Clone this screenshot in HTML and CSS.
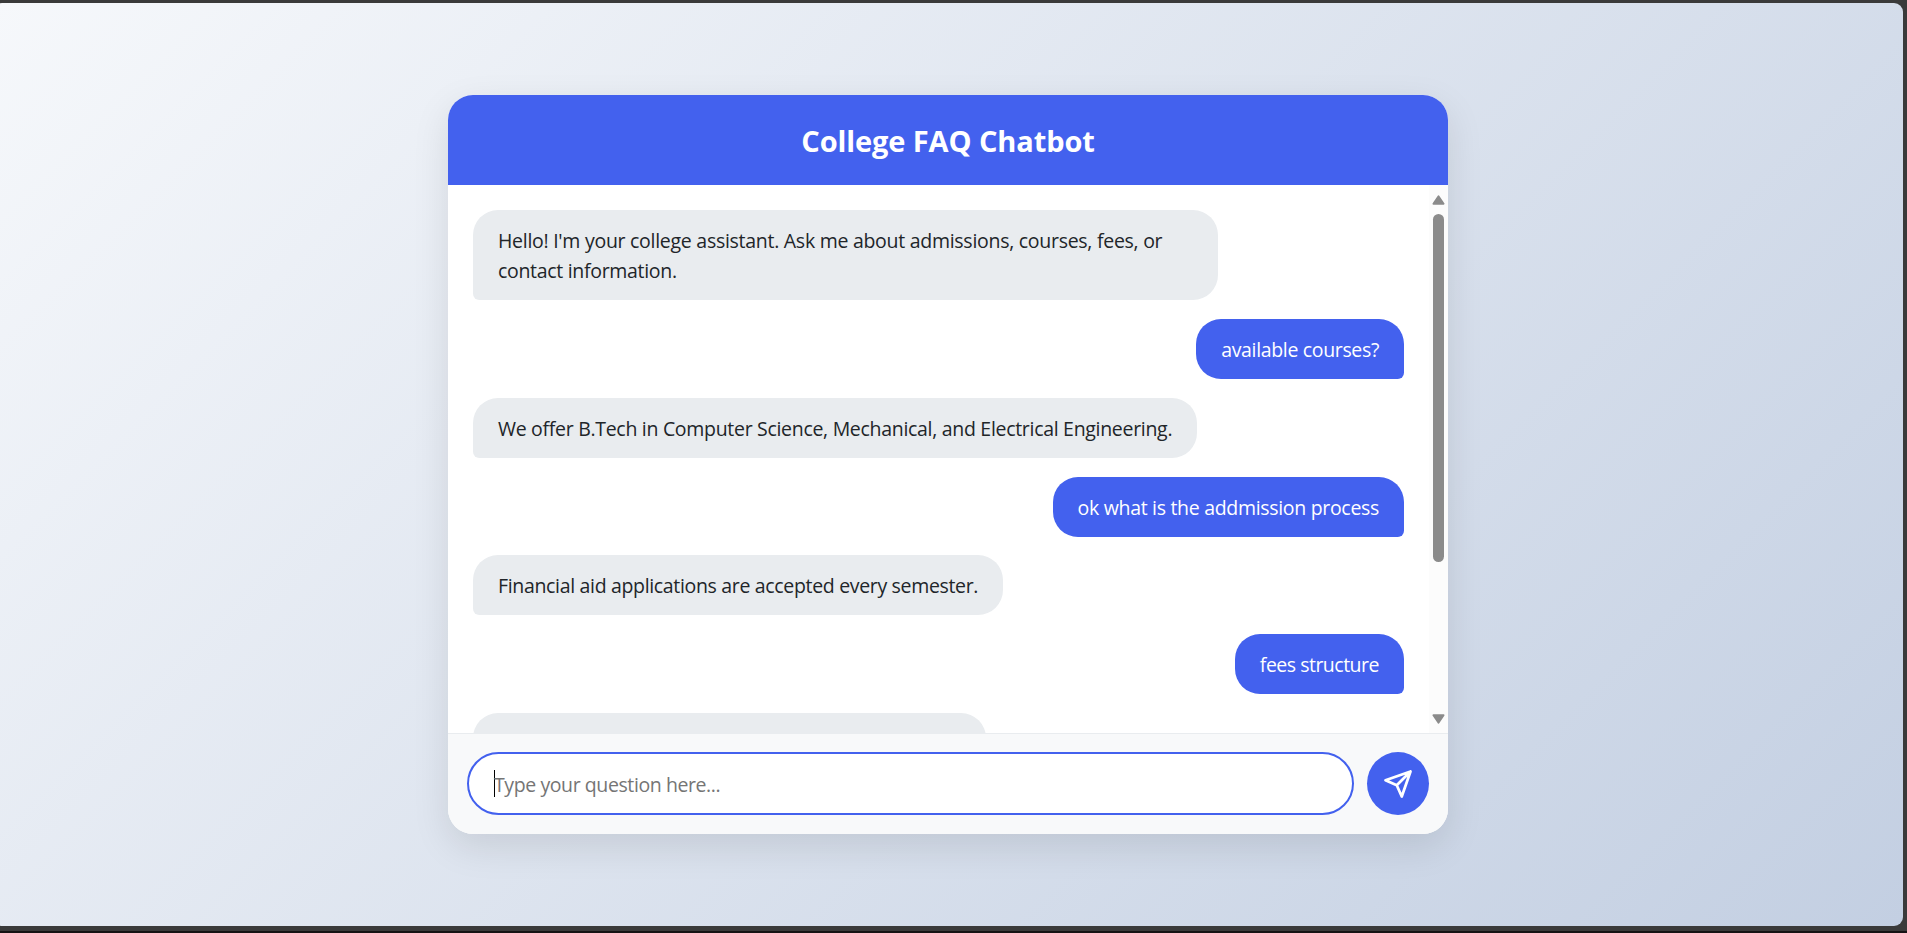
FILE: index.html
```html
<!DOCTYPE html>
<html lang="en">
<head>
<meta charset="utf-8">
<title>College FAQ Chatbot</title>
<link rel="stylesheet" href="styles.css">
</head>
<body>
<div class="viewport">
  <main class="chat">
    <header class="chat-header"><h1 class="title">College FAQ Chatbot</h1></header>
    <section class="chat-body">
      <div class="messages">
        <div class="message bot long"><span class="greeting">Hello! I'm your college assistant. Ask me about admissions, courses, fees, or</span> contact information.</div>
        <div class="message user courses">available courses?</div>
        <div class="message bot offer">We offer B.Tech in Computer Science, Mechanical, and Electrical Engineering.</div>
        <div class="message user">ok what is the addmission process</div>
        <div class="message bot aid">Financial aid applications are accepted every semester.</div>
        <div class="message user fees">fees structure</div>
        <div class="message bot cut"></div>
      </div>
      <div class="scrollbar">
        <svg class="arrow" viewBox="0 0 13 10"><path d="M6.5 1.2 11.6 8.8H1.4Z"/></svg>
        <div class="track"><div class="thumb"></div></div>
        <svg class="arrow" viewBox="0 0 13 10"><path d="M6.5 8.8 1.4 1.2H11.6Z"/></svg>
      </div>
    </section>
    <footer class="chat-input">
      <div class="field"><span class="caret"></span><span class="placeholder">Type your question here...</span></div>
      <button class="send" aria-label="Send">
        <svg class="send-icon" viewBox="0 0 24 24"><path d="M22 2 11 13M22 2l-7 20-4-9-9-4 20-7z"/></svg>
      </button>
    </footer>
  </main>
</div>
</body>
</html>
```
FILE: styles.css
```css
* { box-sizing: border-box; }
body {
  margin: 0;
  height: 933px;
  padding: 3px 4px 5px 0;
  overflow: hidden;
  background: #3a3a3a;
  border-bottom: 2px solid #151314;
  font-family: "Open Sans", "Noto Sans", sans-serif;
}
.viewport {
  height: 923px;
  margin-left: -7px;
  padding-left: 455px;
  padding-top: 92px;
  border-radius: 9px;
  background: linear-gradient(135deg, #f6f8fb 0%, #c3cfe2 100%);
}
.chat {
  display: flex;
  flex-direction: column;
  width: 1000px;
  height: 739px;
  overflow: hidden;
  border-radius: 25px;
  background: #fff;
  box-shadow: 0 12.5px 37.5px rgba(0, 0, 0, 0.1);
}
.chat-header {
  display: flex;
  align-items: center;
  justify-content: center;
  height: 90px;
  flex: none;
  padding-top: 2px;
  background: #4361ee;
  color: #fff;
}
.title { margin: 0; font-size: 29px; font-weight: 700; line-height: 40px; letter-spacing: -0.1px; }
.chat-body { display: flex; flex: 1; min-height: 0; }
.messages {
  display: flex;
  flex-direction: column;
  flex: 1;
  gap: 18.75px;
  padding: 25.3px 25px 0;
  overflow: hidden;
}
.message {
  flex: none;
  padding: 16px 25px 14px;
  border-radius: 25px;
  font-size: 19.5px;
  line-height: 30px;
  letter-spacing: -0.31px;
  white-space: nowrap;
}
.bot { align-self: flex-start; background: #e9ecef; color: #212529; border-bottom-left-radius: 6.25px; }
.user { align-self: flex-end; background: #4361ee; color: #fff; border-bottom-right-radius: 6.25px; }
.long { width: 745px; }
.greeting { display: block; letter-spacing: -0.275px; }
.courses { letter-spacing: -0.34px; }
.offer { letter-spacing: -0.3px; }
.aid { letter-spacing: -0.33px; }
.fees { letter-spacing: -0.5px; }
.cut { width: 513px; height: 60px; }
.scrollbar {
  display: flex;
  flex-direction: column;
  align-items: center;
  width: 19px;
  padding: 10px 0 9px;
  background: #fcfcfc;
}
.arrow { width: 13px; height: 10px; fill: #8b8b8b; stroke: #8b8b8b; stroke-width: 1.8; stroke-linejoin: round; }
.track { flex: 1; width: 11px; padding-top: 9px; }
.thumb { height: 348px; border-radius: 5.5px; background: #8b8b8b; }
.chat-input {
  display: flex;
  flex: none;
  gap: 13px;
  height: 101px;
  padding: 18px 19px;
  border-top: 1px solid #e9ecef;
  background: #f8f9fa;
}
.field {
  display: flex;
  align-items: center;
  flex: 1;
  height: 63px;
  padding-left: 25px;
  border: 2px solid #4361ee;
  border-radius: 32px;
  background: #fff;
}
.caret { width: 1px; height: 27px; margin-right: -1px; background: #000; }
.placeholder { color: #757575; font-size: 19.5px; line-height: 30px; padding-top: 3px; letter-spacing: -0.41px; }
.send {
  display: flex;
  align-items: center;
  justify-content: center;
  width: 62px;
  height: 63px;
  padding: 0;
  border: 0;
  border-radius: 50%;
  background: #4361ee;
}
.send-icon { width: 30px; height: 30px; fill: none; stroke: #fff; stroke-width: 2.2; stroke-linecap: round; stroke-linejoin: round; }
```
